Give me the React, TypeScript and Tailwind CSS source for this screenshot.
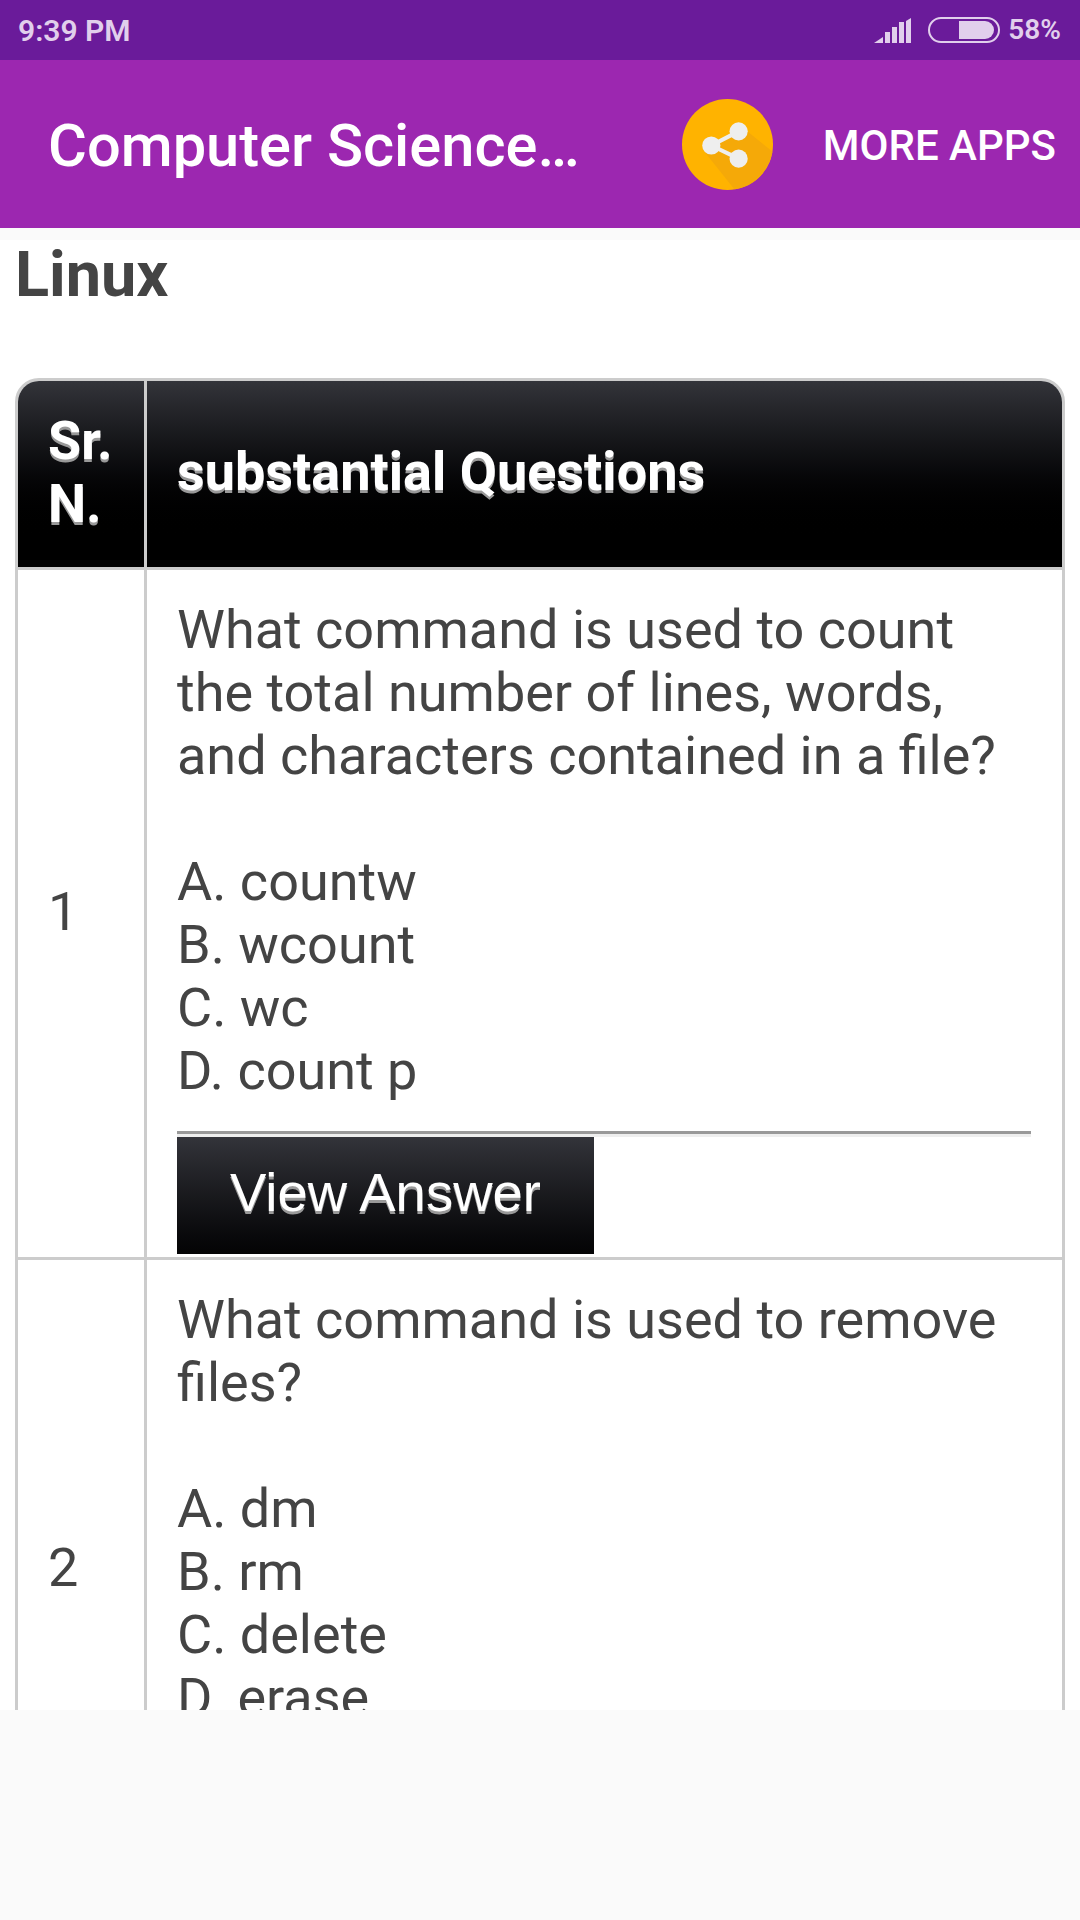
const headerShadow = '[text-shadow:0_3px_0_#999]';

function SignalIcon() {
  return (
    <svg width="37" height="25" viewBox="0 0 37 25" fill="#e1cfec">
      <path d="M0 25 L9 19 V25 Z" />
      <rect x="11" y="14" width="5" height="11" />
      <rect x="18" y="9" width="5" height="16" />
      <rect x="25" y="4" width="5" height="21" />
      <path d="M32 3 L37 0 V25 H32 Z" />
    </svg>
  );
}

function BatteryIcon() {
  return (
    <svg width="72" height="26" viewBox="0 0 72 26">
      <rect x="1" y="1" width="70" height="24" rx="12" fill="none" stroke="#e1cfec" strokeWidth="2" />
      <path d="M31 4 H57 A9 9 0 0 1 66 13 A9 9 0 0 1 57 22 H31 Z" fill="#e1cfec" />
    </svg>
  );
}

function ShareIcon() {
  return (
    <svg width="91" height="91" viewBox="0 0 90 90" className="shrink-0">
      <defs>
        <clipPath id="shareCircle">
          <circle cx="45" cy="45" r="45" />
        </clipPath>
      </defs>
      <circle cx="45" cy="45" r="45" fill="#ffb300" />
      <path d="M62 30 L92 54 V92 H54 L22 52 Z" fill="#f5a908" clipPath="url(#shareCircle)" />
      <path d="M56 32 L29 46 L56 59" fill="none" stroke="#eeeeee" strokeWidth="4" />
      <circle cx="56" cy="32" r="9" fill="#eeeeee" />
      <circle cx="29" cy="46" r="9" fill="#eeeeee" />
      <circle cx="56" cy="59" r="9" fill="#eeeeee" />
    </svg>
  );
}

function QuestionRow({ n, lines, options, numberClass }: { n: number; lines: string[]; options: string[]; numberClass: string }) {
  return (
    <div className="flex border-t-[3px] border-[#cccccc]">
      <div className={`w-[126px] shrink-0 flex items-center pl-[30px] text-[54px] leading-[63px] text-[#444444] ${numberClass}`}>{n}</div>
      <div className="flex-1 border-l-[3px] border-[#cccccc] pl-[30px] pr-[31px] pt-[28px] pb-[3px]">
        <div className="text-[54px] leading-[63px] text-[#444444]">
          {lines.map((line) => (
            <div key={line} className="whitespace-nowrap">{line}</div>
          ))}
          <div className="h-[63px]" />
          {options.map((option) => (
            <div key={option}>{option}</div>
          ))}
        </div>
        <div className="mt-[29px] h-[6px] border-t-[3px] border-[#999999] border-b-[3px] border-b-[#eeeeee]" />
        <div className="w-[417px] h-[117px] pb-[5px] flex items-center justify-center bg-gradient-to-b from-[#33343a] to-[#040405] text-white text-[54.5px] [text-shadow:0_3px_0_#999] font-['Liberation_Sans',sans-serif]">
          View Answer
        </div>
      </div>
    </div>
  );
}

export default function App() {
  return (
    <div className="w-[1080px] h-[1920px] flex flex-col bg-[#fafafa] font-['Roboto',sans-serif] overflow-hidden">
      <div className="h-[60px] shrink-0 flex items-center justify-between bg-[#6a1b9a] pl-[18px] pr-[19px] text-[#e1cfec] font-semibold">
        <span className="text-[30px]">9:39 PM</span>
        <div className="flex items-center">
          <SignalIcon />
          <div className="ml-[17px]">
            <BatteryIcon />
          </div>
          <span className="ml-[8px] text-[28px]">58%</span>
        </div>
      </div>

      <div className="h-[168px] shrink-0 flex items-center bg-[#9c27b0] pl-[48px] pr-[24px] text-white">
        <div className="w-[635px] pt-[6px] text-[59.6px] font-medium whitespace-nowrap">Computer Science…</div>
        <ShareIcon />
        <div className="ml-[50px] pt-[2px] text-[42px] font-medium whitespace-nowrap">MORE APPS</div>
      </div>

      <div className="mt-[12px] h-[1470px] shrink-0 overflow-hidden bg-white">
        <div className="pl-[15px] text-[63px] leading-[69px] font-bold text-[#444444]">Linux</div>
        <div className="mt-[69px] ml-[15px] w-[1050px] border-[3px] border-[#cccccc] rounded-[24px] overflow-hidden">
          <div className="flex h-[186px] bg-gradient-to-b from-[#33343a] to-[#000000] to-[85%] text-white font-bold text-[54px] leading-[63px]">
            <div className={`w-[126px] shrink-0 flex items-center pl-[30px] pb-[5px] ${headerShadow}`}>
              <div>
                Sr.
                <br />
                N.
              </div>
            </div>
            <div className={`flex-1 flex items-center border-l-[3px] border-[#cccccc] pl-[30px] pb-[5px] ${headerShadow}`}>
              substantial Questions
            </div>
          </div>
          <QuestionRow
            n={1}
            numberClass="pb-[5px]"
            lines={['What command is used to count', 'the total number of lines, words,', 'and characters contained in a file?']}
            options={['A. countw', 'B. wcount', 'C. wc', 'D. count p']}
          />
          <QuestionRow
            n={2}
            numberClass="pb-[9px]"
            lines={['What command is used to remove', 'files?']}
            options={['A. dm', 'B. rm', 'C. delete', 'D. erase']}
          />
        </div>
      </div>
    </div>
  );
}
